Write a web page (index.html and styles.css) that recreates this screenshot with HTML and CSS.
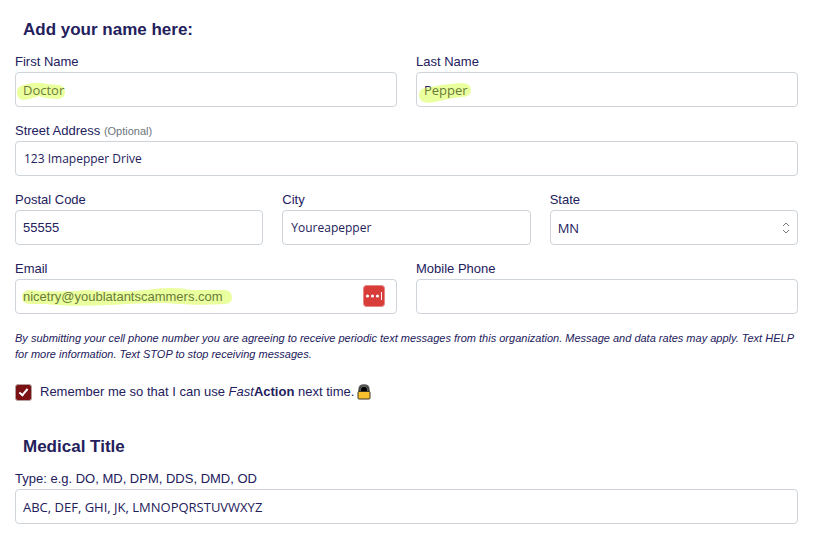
FILE: index.html
```html
<!DOCTYPE html>
<html lang="en">
<head>
  <meta charset="UTF-8" />
  <meta name="viewport" content="width=device-width, initial-scale=1" />
  <title>Contact Information</title>
  <link rel="stylesheet" href="styles.css">
</head>
<body>

  <form class="signup">
    <section>
      <h2>Add your name here:</h2>

      <div class="row">
        <div class="field">
          <label for="firstName">First Name</label>
          <div class="control">
            <input type="text" id="firstName" value="Doctor" />
            <svg class="marker" width="60" height="34" viewBox="0 0 60 34" aria-hidden="true">
              <path d="M2 20 Q2 14 9 13 Q21 9 32 12 L44 13 Q50 14 50 20 Q50 26 43 27 Q31 27 24 24 Q16 27 9 28 Q2 28 2 20Z" />
            </svg>
          </div>
        </div>
        <div class="field">
          <label for="lastName">Last Name</label>
          <div class="control">
            <input type="text" id="lastName" value="Pepper" />
            <svg class="marker" width="60" height="34" viewBox="0 0 60 34" aria-hidden="true">
              <path d="M3 23 Q3 17 9 16 Q27 12 45 11 Q55 11 55 18 Q55 25 46 25 Q34 26 19 30 Q3 33 3 23Z" />
            </svg>
          </div>
        </div>
      </div>

      <div class="row">
        <div class="field">
          <label for="street">Street Address <small>(Optional)</small></label>
          <input type="text" id="street" class="small" value="123 Imapepper Drive" />
        </div>
      </div>

      <div class="row">
        <div class="field">
          <label for="zip">Postal Code</label>
          <input type="text" id="zip" class="plain" value="55555" />
        </div>
        <div class="field">
          <label for="city">City</label>
          <input type="text" id="city" class="small" value="Youreapepper" />
        </div>
        <div class="field">
          <label for="state">State</label>
          <div class="control">
            <select id="state">
              <option selected>MN</option>
              <option>WI</option>
            </select>
            <svg class="arrows" width="8" height="12" viewBox="0 0 8 12" aria-hidden="true">
              <path d="M1 4 L4 1 L7 4 M1 8 L4 11 L7 8" />
            </svg>
          </div>
        </div>
      </div>

      <div class="row">
        <div class="field">
          <label for="email">Email</label>
          <div class="control">
            <input type="email" id="email" class="plain" value="nicetry@youblatantscammers.com" />
            <svg class="marker" width="230" height="34" viewBox="0 0 230 34" aria-hidden="true">
              <path d="M7 18 Q7 12 14 11 Q40 14 72 11 Q100 14 130 11 Q160 7 176 11 L209 11 Q217 12 217 18 Q217 25 210 25 Q185 27 150 24 Q120 24 95 26 Q55 28 30 25 L14 25 Q7 24 7 18Z" />
            </svg>
            <button type="button" class="fill" aria-label="Fill password">
              <svg width="22" height="22" viewBox="0 0 22 22" aria-hidden="true">
                <rect x="0.5" y="0.5" width="21" height="21" rx="3" fill="#d93d3a" stroke="#e58a86" />
                <g fill="#fff">
                  <circle cx="4.5" cy="11" r="1.6" />
                  <circle cx="9.5" cy="11" r="1.6" />
                  <circle cx="14.5" cy="11" r="1.6" />
                  <rect x="18" y="7" width="1" height="8" />
                </g>
              </svg>
            </button>
          </div>
        </div>
        <div class="field">
          <label for="phone">Mobile Phone</label>
          <input type="tel" id="phone" />
        </div>
      </div>

      <p class="terms">By submitting your cell phone number you are agreeing to receive periodic text messages from this organization. Message and data rates may apply. Text HELP for more information. Text STOP to stop receiving messages.</p>

      <div class="remember">
        <input type="checkbox" id="remember" checked />
        <label for="remember">Remember me so that I can use <em>Fast</em><strong>Action</strong> next time.</label>
        <svg width="14" height="16" viewBox="0 0 14 16" aria-hidden="true">
          <path d="M2 8 V5.5 Q2 1 7 1 Q12 1 12 5.5 V8Z" fill="#000" stroke="#555" stroke-width="1.4" />
          <path d="M3.4 7.5 V5.5 Q3.4 2.2 7 2.2 Q10.6 2.2 10.6 5.5 V7.5" fill="none" stroke="#aaa" stroke-width="0.7" />
          <rect x="1" y="7.5" width="12" height="7.5" rx="1" fill="#fbc02d" stroke="#3d3520" />
        </svg>
      </div>
    </section>

    <section>
      <h2>Medical Title</h2>
      <div class="row">
        <div class="field">
          <label for="medicalTitle">Type: e.g. DO, MD, DPM, DDS, DMD, OD</label>
          <input type="text" id="medicalTitle" value="ABC, DEF, GHI, JK, LMNOPQRSTUVWXYZ" />
        </div>
      </div>
    </section>
  </form>

</body>
</html>
```
FILE: styles.css
```css
* {
  box-sizing: border-box;
}

body {
  margin: 0;
  padding: 17px 15px 0;
  font-family: "Liberation Sans", Arial, sans-serif;
  font-size: 13px;
  line-height: 20px;
  color: #23205c;
  background-color: #fff;
}

h2 {
  margin: 0 8px 9px;
  font-size: 17px;
  line-height: 26px;
}

.row {
  display: flex;
  gap: 19px;
  margin-bottom: 14px;
}

.field {
  flex: 1 1 0;
  min-width: 0;
}

.field label {
  display: block;
  height: 20px;
}

.field small {
  font-size: 11px;
  color: #6c757d;
}

.control {
  position: relative;
}

.field input,
.field select {
  display: block;
  width: 100%;
  height: 35px;
  margin: 0;
  padding: 0 7px;
  border: 1px solid #ced4da;
  border-radius: 4px;
  background-color: #fff;
  color: inherit;
  font-family: "Open Sans", "Noto Sans", sans-serif;
  font-size: 13px;
  appearance: none;
}

.field input.plain {
  font-family: inherit;
}

.field input.small {
  padding: 0 8px;
  font-size: 12px;
}

.marker {
  position: absolute;
  top: 0;
  left: 0;
  fill: #cdff0c;
  opacity: 0.4;
  pointer-events: none;
}

.arrows {
  position: absolute;
  top: 12px;
  right: 8px;
  fill: none;
  stroke: #777;
  pointer-events: none;
}

.fill {
  position: absolute;
  top: 6px;
  right: 12px;
  padding: 0;
  border: none;
  background: none;
  line-height: 0;
  cursor: pointer;
}

.terms {
  margin: 16px 0 20px;
  font-size: 11px;
  line-height: 16px;
  font-style: italic;
}

.remember {
  display: flex;
  align-items: center;
  margin-bottom: 32px;
}

.remember input {
  position: relative;
  width: 17px;
  height: 17px;
  margin: 0 8px 0 0;
  border: 1px solid #b5a0a0;
  border-radius: 3px;
  background-color: #7b1113;
  appearance: none;
}

.remember input:checked::after {
  content: "";
  position: absolute;
  top: 2px;
  left: 5px;
  width: 3px;
  height: 7px;
  border: solid #fff;
  border-width: 0 2px 2px 0;
  transform: rotate(40deg);
}

.remember svg {
  margin-left: 3px;
}
```
